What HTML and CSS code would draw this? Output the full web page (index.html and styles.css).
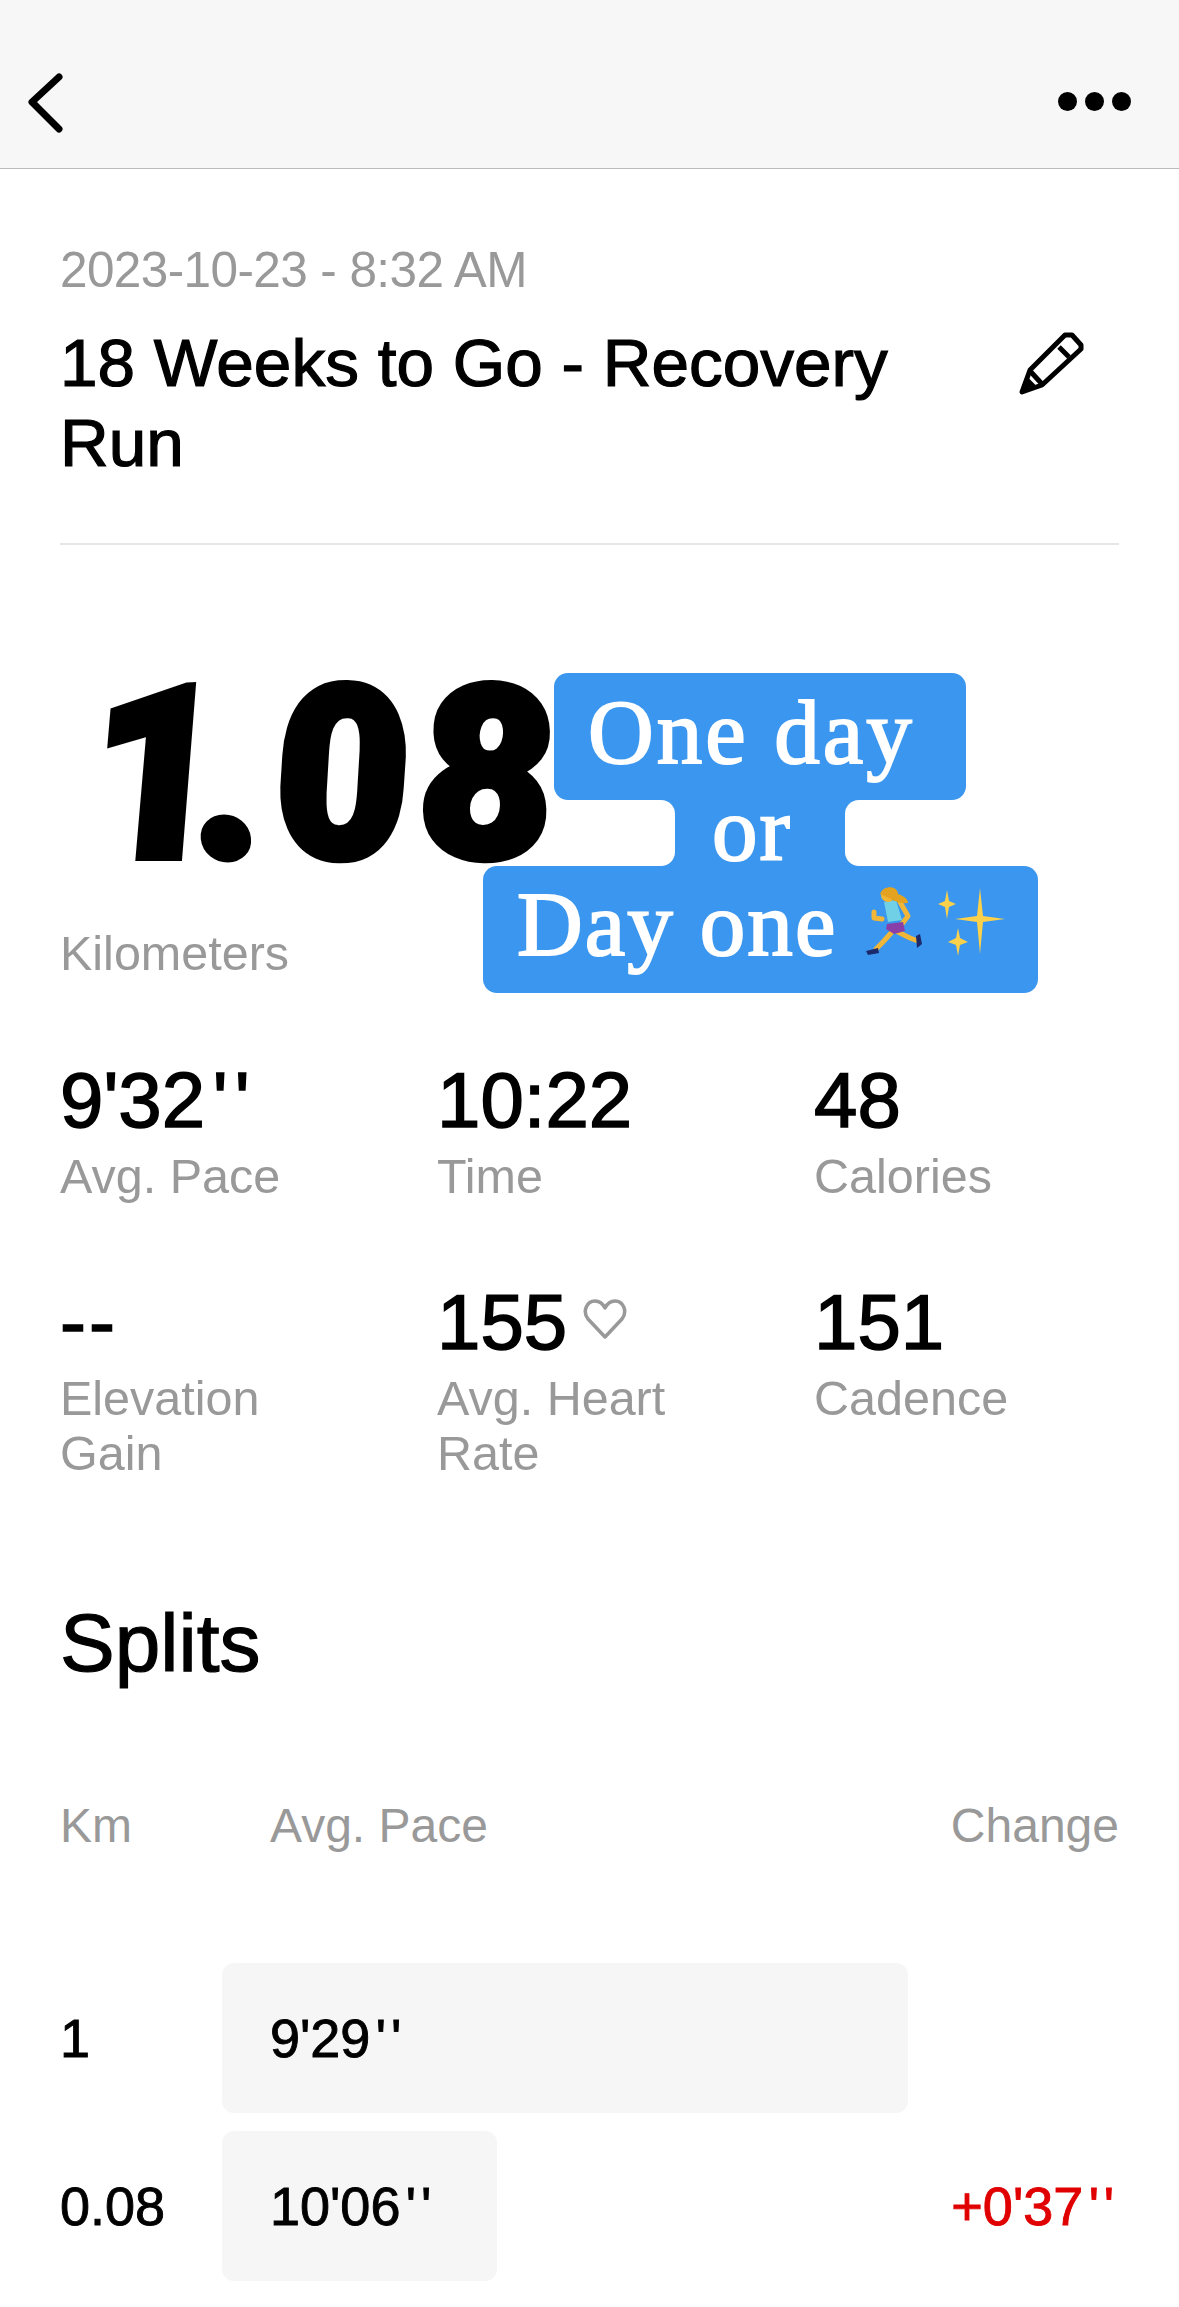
FILE: index.html
```html
<!DOCTYPE html>
<html lang="en">

<head>
    <meta charset="UTF-8">
    <meta name="viewport" content="width=device-width, initial-scale=1.0">
    <title>Run details</title>
    <link rel="stylesheet" href="styles.css">
</head>

<body>
    <header class="topbar">
        <svg class="icon-back" viewBox="0 0 40 60" width="40" height="60">
            <path d="M33 4 L6 29 L33 56" />
        </svg>
        <div class="dots"><span></span><span></span><span></span></div>
    </header>

    <main class="page">
        <section class="intro">
            <div class="date">2023-10-23 - 8:32 AM</div>
            <div class="title-row">
                <h1 class="title">18 Weeks to Go - Recovery Run</h1>
                <svg class="icon-edit" viewBox="0 0 66 68" width="66" height="68">
                    <path d="M3 62 L11 40 L46 5 L53 5 L62 15 L62 19 L23 55 Z" />
                    <path d="M40 17 L50 27" />
                    <path d="M12 42 L23 54" />
                    <path d="M4 61 L8 50 L14 56 Z" class="fill" />
                </svg>
            </div>
        </section>

        <section class="hero">
            <div class="distance"><span class="distance-num">1<span class="point">.</span><span class="zero">0</span>8</span></div>
            <div class="label">Kilometers</div>
        </section>

        <section class="stats">
            <div class="stat">
                <div class="value">9'32<span class="ticks">''</span></div>
                <div class="label">Avg. Pace</div>
            </div>
            <div class="stat">
                <div class="value">10:22</div>
                <div class="label">Time</div>
            </div>
            <div class="stat">
                <div class="value">48</div>
                <div class="label">Calories</div>
            </div>
            <div class="stat">
                <div class="value dashes">--</div>
                <div class="label">Elevation<br>Gain</div>
            </div>
            <div class="stat">
                <div class="value">155
                    <svg class="icon-heart" viewBox="0 0 44 40" width="44" height="40">
                        <path d="M22 38 L5 20 C-1 12 4 2 12 2 C17 2 20 5 22 9 C24 5 27 2 32 2 C40 2 45 12 39 20 Z" />
                    </svg>
                </div>
                <div class="label">Avg. Heart<br>Rate</div>
            </div>
            <div class="stat">
                <div class="value">151</div>
                <div class="label">Cadence</div>
            </div>
        </section>

        <section class="splits">
            <h2 class="splits-title">Splits</h2>
            <div class="split-head label">
                <div class="col-km">Km</div>
                <div class="col-pace">Avg. Pace</div>
                <div class="col-change">Change</div>
            </div>
            <div class="split-row">
                <div class="col-km">1</div>
                <div class="bar" style="width: 686px">9'29<span class="ticks">''</span></div>
            </div>
            <div class="split-row">
                <div class="col-km">0.08</div>
                <div class="bar" style="width: 275px">10'06<span class="ticks">''</span></div>
                <div class="col-change up">+0'37<span class="ticks">''</span></div>
            </div>
        </section>
    </main>

    <!-- sticker placed on top of the photo -->
    <div class="sticker">
        <div class="sticker-block sticker-top">One day</div>
        <div class="sticker-mid">
            <span class="notch notch-left"></span>
            <span class="sticker-or">or</span>
            <span class="notch notch-right"></span>
        </div>
        <div class="sticker-block sticker-bottom">
            Day one
            <svg class="emoji" viewBox="0 0 130 70" width="130" height="70">
                <!-- runner -->
                <path d="M24 33 L16 32 L16 26" class="limb" />
                <path d="M42 16 L50 30 L44 38" class="limb" />
                <path d="M34 46 L24 57 L18 63" class="limb" />
                <path d="M40 46 L52 52 L60 55" class="limb" />
                <path d="M26 16 L38 14 L44 34 L30 36 Z" fill="#6fd0e6" />
                <path d="M29 38 L45 36 L47 45 L36 48 L28 43 Z" fill="#8a3fa8" />
                <circle cx="30" cy="9" r="7" fill="#f2b632" />
                <path d="M22 8 C26 -2 40 0 40 8 C46 10 50 13 50 17 C42 18 34 14 31 12 Z" fill="#e3a21f" />
                <path d="M8 65 L20 62 L21 67 L10 69 Z" fill="#1c2a6b" />
                <path d="M58 50 L62 48 L64 58 L59 62 Z" fill="#1c2a6b" />
                <!-- sparkles -->
                <g transform="translate(7 2)">
                    <path d="M115 0 L118 28 L140 31 L118 34 L115 66 L112 34 L90 31 L112 28 Z" fill="#fbd04a" />
                    <path d="M82 2 L84 13 L91 16 L84 19 L82 31 L80 19 L73 16 L80 13 Z" fill="#fbd04a" />
                    <path d="M93 40 L95 50 L103 54 L95 57 L93 68 L91 57 L83 54 L91 50 Z" fill="#fbd04a" />
                </g>
            </svg>
        </div>
    </div>
</body>

</html>
```
FILE: styles.css
```css
* {
    box-sizing: border-box;
}

html, body {
    margin: 0;
    background-color: #fff;
}

body {
    position: relative;
    height: 2307px;
    overflow: hidden;
    font-family: "Liberation Sans", Arial, sans-serif;
    color: #000;
}

.topbar {
    height: 169px;
    padding: 73px 48px 0 26px;
    display: flex;
    justify-content: space-between;
    align-items: flex-start;
    background-color: #f7f7f7;
    border-bottom: 1px solid #bbb;
}

.icon-back path {
    fill: none;
    stroke: #000;
    stroke-width: 7;
    stroke-linecap: round;
    stroke-linejoin: round;
}

.dots {
    display: flex;
    gap: 8px;
    margin-top: 19px;
}

.dots span {
    width: 19px;
    height: 19px;
    border-radius: 50%;
    background-color: #000;
}

.page {
    padding: 0 60px;
}

.intro {
    padding-top: 73px;
    height: 376px;
    border-bottom: 2px solid #e6e6e6;
}

.date {
    font-size: 49.5px;
    line-height: 56px;
    letter-spacing: -0.6px;
    color: #999;
}

.title-row {
    display: flex;
    justify-content: space-between;
    margin-top: 25px;
}

.title {
    margin: 0;
    width: 900px;
    font-size: 67.5px;
    font-weight: 400;
    line-height: 80px;
    -webkit-text-stroke: 1.2px #000;
}

.icon-edit {
    margin: 7px 34px 0 0;
}

.icon-edit path {
    fill: none;
    stroke: #000;
    stroke-width: 5;
    stroke-linejoin: round;
}

.icon-edit path.fill {
    fill: #000;
}

.hero {
    height: 513px;
}

.distance {
    padding: 100px 0 0 28px;
    height: 381px;
    font-family: Roboto, "Liberation Sans", sans-serif;
    font-size: 240px;
    font-style: italic;
    font-weight: 900;
    line-height: 260px;
    letter-spacing: -4px;
    white-space: nowrap;
    -webkit-text-stroke: 8px #000;
}

.distance-num {
    display: inline-block;
    transform: skewX(5deg);
}

.point {
    margin: 0 12px 0 -24px;
}

.zero {
    margin-right: 14px;
}

.label {
    font-size: 48.5px;
    line-height: 55px;
    color: #999;
}

.stats {
    display: grid;
    grid-template-columns: repeat(3, 377px);
    grid-auto-rows: 222px;
}

.value {
    margin: -3px 0 4px;
    font-size: 78px;
    line-height: 90px;
    -webkit-text-stroke: 1.5px #000;
}

.ticks {
    margin-left: 0.1em;
    letter-spacing: 0.09em;
}

.dashes {
    letter-spacing: 3px;
}

.icon-heart {
    margin-left: -6px;
    vertical-align: 10px;
}

.icon-heart path {
    fill: none;
    stroke: #999;
    stroke-width: 3.5;
    stroke-linejoin: round;
}

.splits {
    margin-top: 96px;
}

.splits-title {
    margin: 0;
    font-size: 82px;
    font-weight: 400;
    line-height: 90px;
    -webkit-text-stroke: 1.2px #000;
}

.split-head {
    display: flex;
    margin-top: 110px;
}

.split-head.label {
    font-size: 48px;
}

.split-head .col-pace {
    margin-left: 48px;
    flex: 1;
}

.col-km {
    width: 162px;
}

.split-row {
    display: flex;
    align-items: center;
    height: 150px;
    margin-bottom: 18px;
    font-size: 54px;
    -webkit-text-stroke: 0.9px #000;
}

.split-head + .split-row {
    margin-top: 110px;
}

.bar {
    height: 150px;
    padding-left: 48px;
    display: flex;
    align-items: center;
    background-color: #f6f6f6;
    border-radius: 12px;
}

.col-change.up {
    margin-left: auto;
    color: #e00000;
    -webkit-text-stroke: 0.9px #e00000;
}

.sticker {
    position: absolute;
    left: 483px;
    top: 673px;
    width: 555px;
    display: flex;
    flex-direction: column;
    align-items: center;
    font-family: "Liberation Serif", serif;
    font-size: 91px;
    color: #fff;
    letter-spacing: 2.1px;
    -webkit-text-stroke: 2px #fff;
}

.sticker-block {
    display: flex;
    background-color: #3a96ee;
    border-radius: 14px;
    white-space: nowrap;
}

.sticker-top {
    margin-left: -1px;
    width: 412px;
    height: 127px;
    padding: 18px 0 0 34px;
    line-height: 84px;
    letter-spacing: 3px;
}

.sticker-mid {
    width: 412px;
    height: 66px;
    margin-left: -1px;
    display: flex;
    justify-content: space-between;
    background-color: #3a96ee;
}

.notch {
    width: 121px;
    background-color: #fff;
}

.notch-left {
    border-radius: 0 14px 14px 0;
}

.notch-right {
    border-radius: 14px 0 0 14px;
}

.sticker-or {
    line-height: 59px;
    padding-right: 16px;
}

.sticker-bottom {
    width: 555px;
    height: 127px;
    padding: 15px 0 0 34px;
    line-height: 88px;
}

.emoji {
    margin: 5px 0 0 21px;
    flex: none;
    overflow: visible;
}

.limb {
    fill: none;
    stroke: #f0b638;
    stroke-width: 5;
    stroke-linecap: round;
    stroke-linejoin: round;
}
```
